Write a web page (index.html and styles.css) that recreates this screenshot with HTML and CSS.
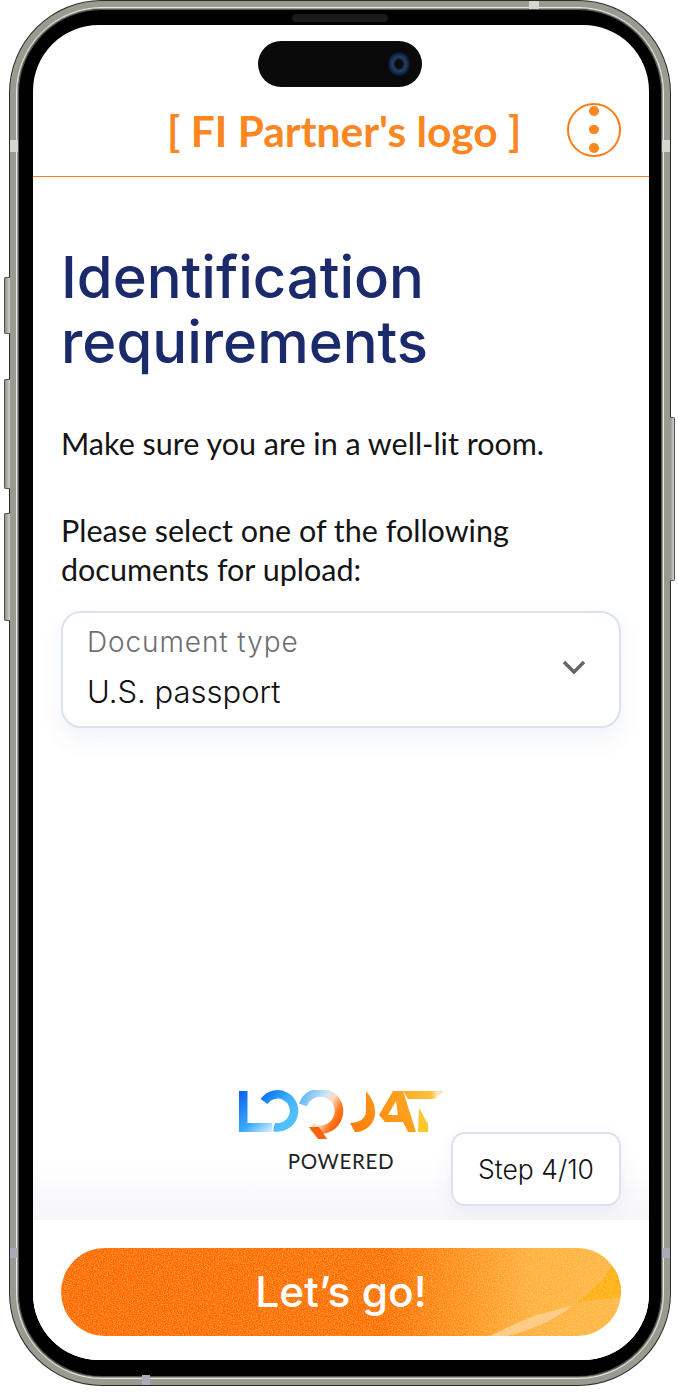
FILE: index.html
```html
<!DOCTYPE html>
<html lang="en">
<head>
    <meta charset="UTF-8">
    <meta name="viewport" content="width=device-width, initial-scale=1.0">
    <title>Identification requirements</title>
    <link rel="stylesheet" href="styles.css">
</head>
<body>
    <div class="phone">
        <!-- hardware buttons -->
        <span class="side-btn btn-mute"></span>
        <span class="side-btn btn-vol-up"></span>
        <span class="side-btn btn-vol-down"></span>
        <span class="side-btn btn-power"></span>
        <!-- antenna bands -->
        <span class="band band-top"></span>
        <span class="band band-left-1"></span>
        <span class="band band-right-1"></span>
        <span class="band band-left-2"></span>
        <span class="band band-right-2"></span>
        <span class="band band-bottom"></span>
        <span class="speaker"></span>

        <div class="screen">
            <div class="island"><span class="lens"></span></div>

            <header class="app-header">
                <div class="partner-logo">[ FI Partner's logo ]</div>
                <button class="menu-btn" type="button" aria-label="Menu">
                    <span></span><span></span><span></span>
                </button>
            </header>

            <main class="content">
                <h1>Identification requirements</h1>
                <p class="hint">Make sure you are in a well-lit room.</p>
                <p class="prompt">Please select one of the following documents for upload:</p>

                <div class="select-box">
                    <div class="select-text">
                        <div class="select-label">Document type</div>
                        <div class="select-value">U.S. passport</div>
                    </div>
                    <svg class="chevron" width="24" height="15" viewBox="0 0 24 15">
                        <path d="M2 2l10 10L22 2" fill="none" stroke="#666" stroke-width="3.4"/>
                    </svg>
                </div>
            </main>

            <section class="brand-area">
                <div class="brand">
                    <svg class="brand-mark" width="206" height="50" viewBox="0 0 206 50" role="img" aria-label="Loquat">
                        <defs>
                            <linearGradient id="lGrad" gradientUnits="userSpaceOnUse" x1="1" y1="1" x2="36" y2="42">
                                <stop offset="0" stop-color="#0a62f2"/>
                                <stop offset="0.6" stop-color="#38aaf8"/>
                                <stop offset="1" stop-color="#e8f6ff"/>
                            </linearGradient>
                            <linearGradient id="oGrad" gradientUnits="userSpaceOnUse" x1="24" y1="4" x2="50" y2="30">
                                <stop offset="0" stop-color="#0a6cf0"/>
                                <stop offset="0.6" stop-color="#3fb2fb"/>
                                <stop offset="1" stop-color="#52c0ff"/>
                            </linearGradient>
                            <linearGradient id="qGrad" gradientUnits="userSpaceOnUse" x1="62" y1="6" x2="105" y2="30">
                                <stop offset="0" stop-color="#57b4f6"/>
                                <stop offset="0.45" stop-color="#cfe6f5"/>
                                <stop offset="0.62" stop-color="#ffd9c0"/>
                                <stop offset="0.82" stop-color="#ff7a22"/>
                                <stop offset="1" stop-color="#f9560a"/>
                            </linearGradient>
                            <linearGradient id="warmGrad" gradientUnits="userSpaceOnUse" x1="112" y1="42" x2="178" y2="1">
                                <stop offset="0" stop-color="#ff7a0a"/>
                                <stop offset="0.6" stop-color="#ff9a18"/>
                                <stop offset="1" stop-color="#ffa922"/>
                            </linearGradient>
                            <linearGradient id="barGrad" x1="0" y1="0" x2="1" y2="0">
                                <stop offset="0" stop-color="#ffae22"/>
                                <stop offset="0.7" stop-color="#ffbe3c"/>
                                <stop offset="0.88" stop-color="#fff0cf"/>
                                <stop offset="1" stop-color="#ffc64a"/>
                            </linearGradient>
                        </defs>
                        <path d="M1 1h8.500v32H34v9H1z" fill="url(#lGrad)"/>
                        <path d="M26 11.500A16.500 16.500 0 1 1 36 37" fill="none" stroke="url(#oGrad)" stroke-width="8.500"/>
                        <path d="M65 15A18.500 18.500 0 1 1 73 37" fill="none" stroke="url(#qGrad)" stroke-width="8.500"/>
                        <path d="M71 37l9 12h9l-8-12z" fill="#f9620f"/>
                        <path d="M128 1C134 8 137 15 137 22C137 34 128 42 117 42L112 33C122 33 128 28 128 21z" fill="url(#warmGrad)"/>
                        <path d="M155 1H165L178 42H170L165 32H147L141 25zM150 25H160L158 11z" fill="url(#warmGrad)" fill-rule="evenodd"/>
                        <path d="M165 1H205L197 9H170z" fill="url(#barGrad)"/>
                        <path d="M181 18L190 34V42H180z" fill="#ffc62e"/>
                    </svg>
                    <div class="powered">POWERED</div>
                </div>
                <div class="step-badge">Step 4/10</div>
            </section>

            <footer class="action-bar">
                <button class="go-btn" type="button">
                    <svg class="go-texture" width="560" height="88" viewBox="0 0 560 88">
                        <defs>
                            <filter id="grain" x="0" y="0" width="100%" height="100%">
                                <feTurbulence type="fractalNoise" baseFrequency="0.8" numOctaves="2" seed="4"/>
                                <feColorMatrix values="0 0 0 0 1  0 0 0 0 0.74  0 0 0 0 0.2  1.8 0 0 0 -0.65"/>
                            </filter>
                        </defs>
                        <path d="M516 54C530 44 542 32 550 19L560 15V49z" fill="#ffae12"/>
                        <path d="M429 88C445 80 460 73 476 67C490 63 502 60 512 57C505 64 495 69 486 74C473 80 460 85 446 88z" fill="#ffc98a"/>
                        <rect width="560" height="88" filter="url(#grain)" opacity="0.6"/>
                    </svg>
                    <span class="go-label">Let’s go!</span>
                </button>
            </footer>
        </div>
    </div>
</body>
</html>
```

FILE: styles.css
```css
* {
    box-sizing: border-box;
}

html, body {
    height: 100%;
}

body {
    margin: 0;
    background: #fff;
    overflow: hidden;
    font-family: "Lato", "Noto Sans", sans-serif;
}

.phone {
    position: relative;
    width: 660px;
    height: 1384px;
    margin: 1px 0 0 10px;
    padding: 16px 13px 17px 15px;
    background: #000;
    border-radius: 92px;
    border: 8px solid #9a9b90;
    box-shadow: inset 0 0 0 1px #555, 0 0 0 1px #2b2b2b;
    outline: 1px solid #e8e8e4;
    outline-offset: -7px;
}

.side-btn {
    position: absolute;
    width: 6px;
    background: linear-gradient(90deg, #8f908a, #d4d4d0);
    border: 1px solid #555;
    border-right: none;
    border-radius: 2px 0 0 2px;
}

.btn-mute { left: -14px; top: 268px; height: 57px; }
.btn-vol-up { left: -14px; top: 370px; height: 110px; }
.btn-vol-down { left: -14px; top: 504px; height: 108px; }

.btn-power {
    left: auto;
    right: -13px;
    top: 408px;
    width: 5px;
    height: 164px;
    border: 1px solid #555;
    border-left: none;
    border-radius: 0 2px 2px 0;
}

.band {
    position: absolute;
    background: #c9cac6;
}

.band-top { left: 511px; top: -8px; width: 10px; height: 8px; background: #d5d6d2; }
.band-left-1 { left: -8px; top: 131px; width: 8px; height: 12px; background: #d5d6d2; }
.band-right-1 { right: -8px; top: 131px; width: 8px; height: 12px; background: #d5d6d2; }
.band-left-2 { left: -8px; top: 1239px; width: 8px; height: 10px; background: #a9abb8; }
.band-right-2 { right: -8px; top: 1239px; width: 8px; height: 10px; background: #a9abb8; }
.band-bottom { left: 124px; bottom: -8px; width: 8px; height: 10px; background: #a9abb8; }

.speaker {
    position: absolute;
    left: 274px;
    top: 5px;
    width: 96px;
    height: 8px;
    background: #1a1a1a;
    border-radius: 4px;
}

.screen {
    position: relative;
    display: flex;
    flex-direction: column;
    height: 100%;
    background: #fff;
    border-radius: 66px;
    overflow: hidden;
    color: #111;
}

.island {
    position: absolute;
    left: 225px;
    top: 16px;
    width: 164px;
    height: 46px;
    background: #0a0a0a;
    border-radius: 23px;
}

.lens {
    position: absolute;
    right: 12px;
    top: 11px;
    width: 22px;
    height: 24px;
    border-radius: 50%;
    background: radial-gradient(ellipse at center, #0a0a0a 22%, #22406e 42%, #0c1220 72%);
}

.app-header {
    display: flex;
    align-items: center;
    justify-content: flex-end;
    flex: none;
    height: 152px;
    padding: 58px 28px 0;
    border-bottom: 1px solid #ff7a1a;
    position: relative;
}

.partner-logo {
    position: absolute;
    left: 134px;
    top: 81px;
    width: 353px;
    font-size: 42.500px;
    font-weight: 700;
    line-height: 50px;
    color: #fb8622;
    white-space: nowrap;
    text-align: center;
}

.menu-btn {
    display: flex;
    flex-direction: column;
    align-items: center;
    justify-content: center;
    gap: 9px;
    width: 54px;
    height: 54px;
    padding: 0;
    background: #fff;
    border: 2px solid #fb7a14;
    border-radius: 50%;
}

.menu-btn span {
    width: 9.500px;
    height: 9.500px;
    background: #fb8622;
    border-radius: 50%;
}

.content {
    flex: 1;
    padding: 68px 28px 0;
}

h1 {
    margin: 0 0 49px;
    font-family: "Inter", "Noto Sans", sans-serif;
    font-size: 58px;
    font-weight: 500;
    line-height: 65px;
    color: #1b2a6b;
    width: 440px;
}

.hint, .prompt {
    margin: 0;
    font-size: 30.500px;
    line-height: 39px;
    color: #141414;
}

.hint {
    margin-bottom: 48px;
}

.prompt {
    width: 520px;
}

.select-box {
    display: flex;
    align-items: center;
    justify-content: space-between;
    height: 117px;
    margin-top: 22px;
    padding: 0 33px 4px 24px;
    background: #fff;
    border: 2px solid #dce2f2;
    border-radius: 20px;
    box-shadow: 0 12px 24px rgba(60, 80, 140, 0.07);
}

.select-label {
    font-family: "Inter", "Noto Sans", sans-serif;
    font-size: 28px;
    font-weight: 300;
    line-height: 34px;
    letter-spacing: 0.9px;
    color: #6f6f6f;
}

.select-value {
    margin-top: 14px;
    font-family: "Inter", "Noto Sans", sans-serif;
    font-size: 31px;
    font-weight: 300;
    line-height: 38px;
    color: #111;
}

.brand-area {
    flex: none;
    position: relative;
    display: flex;
    justify-content: center;
    height: 220px;
    padding: 90px 0 0 0;
    background: linear-gradient(180deg, #fff 72%, #f6f6fa 100%);
}

.brand {
    display: flex;
    flex-direction: column;
    align-items: center;
}

.powered {
    margin-top: 10px;
    font-size: 20.500px;
    line-height: 22px;
    letter-spacing: 0.7px;
    color: #222;
}

.step-badge {
    position: absolute;
    right: 28px;
    top: 132px;
    display: flex;
    align-items: center;
    justify-content: center;
    width: 170px;
    height: 74px;
    font-family: "Inter", "Noto Sans", sans-serif;
    font-size: 26.500px;
    font-weight: 300;
    color: #111;
    background: #fff;
    border: 2px solid #dce2f2;
    border-radius: 14px;
    box-shadow: 0 6px 18px rgba(60, 80, 140, 0.08);
}

.action-bar {
    flex: none;
    display: flex;
    height: 140px;
    padding: 28px 28px 24px;
    background: #fff;
}

.go-btn {
    position: relative;
    flex: 1;
    padding: 0 0 2px;
    overflow: hidden;
    border: none;
    border-radius: 44px;
    background: linear-gradient(90deg, #ff6400 0%, #ff6a00 58%, #ff8e1e 72%, #ffae3e 84%, #ffb648 100%);
}

.go-texture {
    position: absolute;
    left: 0;
    top: 0;
}

.go-label {
    position: relative;
    font-family: "Inter", "Noto Sans", sans-serif;
    font-size: 42.500px;
    font-weight: 500;
    color: #fff;
}
```
